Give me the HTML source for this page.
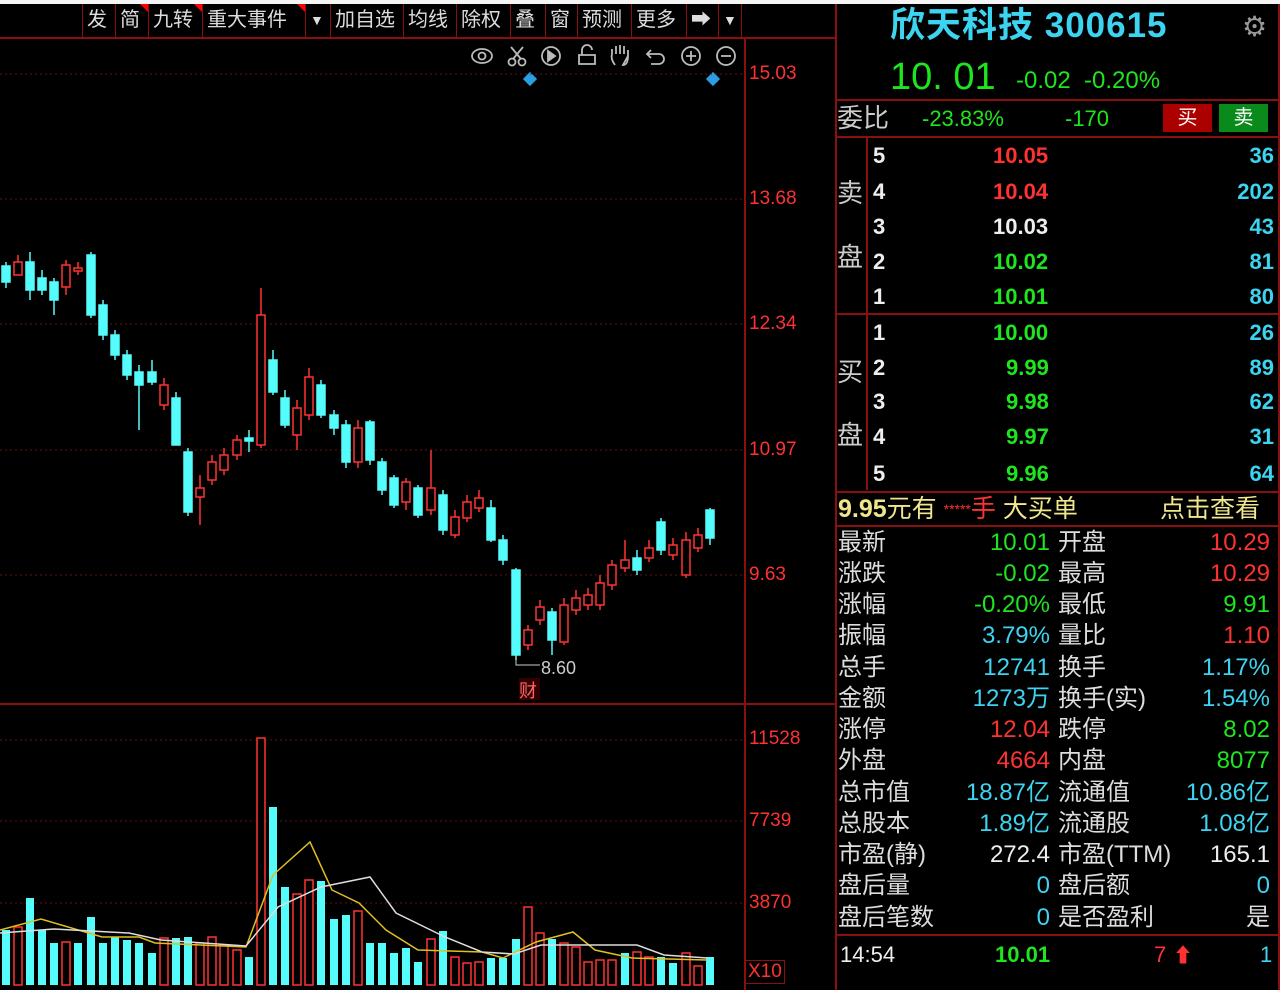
<!DOCTYPE html>
<html><head><meta charset="utf-8"><style>
*{margin:0;padding:0;box-sizing:border-box}
body{width:1280px;height:990px;background:#000;overflow:hidden;position:relative;font-family:"Liberation Sans","Noto Sans CJK SC",sans-serif;color:#ddd}
.a{position:absolute;white-space:nowrap}
.tb{position:absolute;top:4px;height:33px;border-left:1px solid #8a1010;color:#ddd;font-size:20px;line-height:33px;padding:0 4px}
.r{color:#ff3232}.g{color:#1ee61e}.c{color:#3cd4f0}.w{color:#eee}.y{color:#f0e68c}
.row{position:absolute;left:838px;width:436px;height:31px;font-size:24px;line-height:31px}
.row span{position:absolute}
.ob{position:absolute;left:868px;width:406px;height:35px;font-size:22px;line-height:35px;font-weight:bold}
.ob span{position:absolute}
</style></head><body>
<div class="a" style="left:0;top:0;width:1280px;height:4px;background:#f5f5f5"></div>
<div class="a" style="left:0;top:37px;width:836px;height:2px;background:#8a1010"></div>
<div class="tb" style="left:82px">发</div>
<div class="tb" style="left:115px">简</div>
<div class="tb" style="left:148px">九转</div>
<div class="tb" style="left:202px">重大事件</div>
<div class="tb" style="left:305px;font-size:14px">▼</div>
<div class="tb" style="left:330px">加自选</div>
<div class="tb" style="left:403px">均线</div>
<div class="tb" style="left:456px">除权</div>
<div class="tb" style="left:510px">叠</div>
<div class="tb" style="left:545px">窗</div>
<div class="tb" style="left:577px">预测</div>
<div class="tb" style="left:631px">更多</div>
<div class="tb" style="left:686px">➡</div>
<div class="tb" style="left:718px;font-size:14px;border-right:1px solid #8a1010">▼</div>
<div class="a" style="left:140px;top:4px;width:0;height:0;border-left:8px solid transparent;border-top:8px solid #f00"></div>
<div class="a" style="left:194px;top:4px;width:0;height:0;border-left:8px solid transparent;border-top:8px solid #f00"></div>
<div class="a" style="left:297px;top:4px;width:0;height:0;border-left:8px solid transparent;border-top:8px solid #f00"></div>
<svg class="a" style="left:465px;top:42px" width="280" height="30" fill="none" stroke="#bbb" stroke-width="1.8">
<ellipse cx="17" cy="14" rx="10" ry="7"/><circle cx="17" cy="14" r="3.5"/>
<circle cx="47" cy="20" r="3.5"/><circle cx="57" cy="20" r="3.5"/><path d="M48 17 L58 5 M56 17 L46 5"/>
<circle cx="86" cy="14" r="9"/><path d="M83 9 L90 14 L83 19 Z" fill="#bbb"/>
<path d="M114 22 V13 H130 V22 Z M117 13 V8 A5 5 0 0 1 127 8"/>
<path d="M150 23 C147 19 146 15 147 12 V7 M151 12 V4 M155 12 V3 M159 12 V4 M163 14 V8 M163 14 C163 20 161 23 158 23 Z"/>
<path d="M186 8 L182 12 L186 16 M182 12 H194 A5 5 0 0 1 194 22 H186"/>
<circle cx="226" cy="14" r="9"/><path d="M221 14 H231 M226 9 V19"/>
<circle cx="261" cy="14" r="9"/><path d="M256 14 H266"/>
</svg>
<div class="a" style="left:525px;top:74px;width:10px;height:10px;background:#2a9ee0;transform:rotate(45deg)"></div>
<div class="a" style="left:708px;top:74px;width:10px;height:10px;background:#2a9ee0;transform:rotate(45deg)"></div>
<div class="a" style="left:744px;top:37px;width:2px;height:953px;background:#8a1010"></div>
<div class="a" style="left:835px;top:4px;width:2px;height:986px;background:#8a1010"></div>
<div class="a" style="left:0;top:703px;width:836px;height:2px;background:#8a1010"></div>
<div class="a r" style="left:749px;top:63px;font-size:19px">15.03</div>
<div class="a r" style="left:749px;top:188px;font-size:19px">13.68</div>
<div class="a r" style="left:749px;top:313px;font-size:19px">12.34</div>
<div class="a r" style="left:749px;top:439px;font-size:19px">10.97</div>
<div class="a r" style="left:749px;top:564px;font-size:19px">9.63</div>
<div class="a r" style="left:749px;top:728px;font-size:19px">11528</div>
<div class="a r" style="left:749px;top:810px;font-size:19px">7739</div>
<div class="a r" style="left:749px;top:892px;font-size:19px">3870</div>
<div class="a r" style="left:745px;top:960px;font-size:19px;border:1px solid #8a1010;padding:0 2px">X10</div>
<svg class="a" style="left:0;top:0" width="745" height="990">
<g stroke="#6a1010" stroke-dasharray="2,3" stroke-width="1">
<line x1="0" y1="74" x2="744" y2="74"/><line x1="0" y1="199" x2="744" y2="199"/><line x1="0" y1="324" x2="744" y2="324"/><line x1="0" y1="450" x2="744" y2="450"/><line x1="0" y1="575" x2="744" y2="575"/>
<line x1="0" y1="740" x2="744" y2="740"/><line x1="0" y1="821" x2="744" y2="821"/><line x1="0" y1="903" x2="744" y2="903"/></g>
<g stroke-width="1.5">
<g stroke="#54fcfc" fill="#54fcfc">
<line x1="6" y1="262" x2="6" y2="288"/><rect x="2" y="266" width="8" height="16"/>
<line x1="30" y1="252" x2="30" y2="300"/><rect x="26" y="262" width="8" height="28"/>
<line x1="42" y1="270" x2="42" y2="295"/><rect x="38" y="278" width="8" height="12"/>
<line x1="54" y1="278" x2="54" y2="315"/><rect x="50" y="282" width="8" height="18"/>
<line x1="91" y1="252" x2="91" y2="318"/><rect x="87" y="255" width="8" height="60"/>
<line x1="103" y1="300" x2="103" y2="340"/><rect x="99" y="305" width="8" height="30"/>
<line x1="115" y1="330" x2="115" y2="360"/><rect x="111" y="335" width="8" height="20"/>
<line x1="127" y1="350" x2="127" y2="380"/><rect x="123" y="355" width="8" height="20"/>
<line x1="139" y1="365" x2="139" y2="430"/><rect x="135" y="372" width="8" height="13"/>
<line x1="152" y1="360" x2="152" y2="385"/><rect x="148" y="372" width="8" height="10"/>
<line x1="176" y1="392" x2="176" y2="445"/><rect x="172" y="398" width="8" height="47"/>
<line x1="188" y1="448" x2="188" y2="516"/><rect x="184" y="452" width="8" height="60"/>
<line x1="249" y1="430" x2="249" y2="452"/><rect x="245" y="438" width="8" height="3"/>
<line x1="273" y1="350" x2="273" y2="395"/><rect x="269" y="360" width="8" height="32"/>
<line x1="285" y1="390" x2="285" y2="428"/><rect x="281" y="398" width="8" height="27"/>
<line x1="321" y1="380" x2="321" y2="418"/><rect x="317" y="385" width="8" height="30"/>
<line x1="334" y1="410" x2="334" y2="435"/><rect x="330" y="415" width="8" height="13"/>
<line x1="346" y1="420" x2="346" y2="468"/><rect x="342" y="425" width="8" height="37"/>
<line x1="370" y1="420" x2="370" y2="465"/><rect x="366" y="422" width="8" height="38"/>
<line x1="382" y1="458" x2="382" y2="495"/><rect x="378" y="462" width="8" height="28"/>
<line x1="394" y1="475" x2="394" y2="508"/><rect x="390" y="478" width="8" height="27"/>
<line x1="418" y1="485" x2="418" y2="518"/><rect x="414" y="488" width="8" height="27"/>
<line x1="443" y1="490" x2="443" y2="535"/><rect x="439" y="495" width="8" height="35"/>
<line x1="491" y1="500" x2="491" y2="542"/><rect x="487" y="508" width="8" height="32"/>
<line x1="503" y1="535" x2="503" y2="565"/><rect x="499" y="540" width="8" height="20"/>
<line x1="516" y1="568" x2="516" y2="660"/><rect x="512" y="570" width="8" height="85"/>
<line x1="552" y1="608" x2="552" y2="655"/><rect x="548" y="612" width="8" height="28"/>
<line x1="637" y1="550" x2="637" y2="575"/><rect x="633" y="558" width="8" height="12"/>
<line x1="661" y1="518" x2="661" y2="555"/><rect x="657" y="522" width="8" height="28"/>
<line x1="710" y1="508" x2="710" y2="545"/><rect x="706" y="510" width="8" height="28"/>
</g>
<g stroke="#ff3232" fill="#000">
<line x1="18" y1="255" x2="18" y2="262"/><rect x="14" y="262" width="8" height="13"/>
<line x1="66" y1="260" x2="66" y2="295"/><rect x="62" y="265" width="8" height="22"/>
<line x1="78" y1="262" x2="78" y2="275"/><rect x="74" y="268" width="8" height="3"/>
<line x1="164" y1="378" x2="164" y2="410"/><rect x="160" y="385" width="8" height="20"/>
<line x1="200" y1="475" x2="200" y2="525"/><rect x="196" y="488" width="8" height="9"/>
<line x1="212" y1="455" x2="212" y2="485"/><rect x="208" y="462" width="8" height="18"/>
<line x1="224" y1="448" x2="224" y2="475"/><rect x="220" y="455" width="8" height="15"/>
<line x1="237" y1="435" x2="237" y2="460"/><rect x="233" y="440" width="8" height="15"/>
<line x1="261" y1="288" x2="261" y2="448"/><rect x="257" y="315" width="8" height="130"/>
<line x1="297" y1="400" x2="297" y2="450"/><rect x="293" y="408" width="8" height="27"/>
<line x1="309" y1="368" x2="309" y2="420"/><rect x="305" y="377" width="8" height="38"/>
<line x1="358" y1="420" x2="358" y2="468"/><rect x="354" y="428" width="8" height="34"/>
<line x1="406" y1="478" x2="406" y2="510"/><rect x="402" y="482" width="8" height="20"/>
<line x1="431" y1="450" x2="431" y2="515"/><rect x="427" y="488" width="8" height="22"/>
<line x1="455" y1="510" x2="455" y2="538"/><rect x="451" y="517" width="8" height="18"/>
<line x1="467" y1="495" x2="467" y2="522"/><rect x="463" y="502" width="8" height="16"/>
<line x1="479" y1="490" x2="479" y2="512"/><rect x="475" y="498" width="8" height="10"/>
<line x1="528" y1="625" x2="528" y2="650"/><rect x="524" y="630" width="8" height="15"/>
<line x1="540" y1="600" x2="540" y2="625"/><rect x="536" y="607" width="8" height="13"/>
<line x1="564" y1="598" x2="564" y2="645"/><rect x="560" y="605" width="8" height="37"/>
<line x1="576" y1="590" x2="576" y2="615"/><rect x="572" y="598" width="8" height="12"/>
<line x1="588" y1="588" x2="588" y2="610"/><rect x="584" y="595" width="8" height="10"/>
<line x1="600" y1="575" x2="600" y2="610"/><rect x="596" y="583" width="8" height="22"/>
<line x1="612" y1="560" x2="612" y2="590"/><rect x="608" y="565" width="8" height="20"/>
<line x1="625" y1="540" x2="625" y2="572"/><rect x="621" y="560" width="8" height="8"/>
<line x1="649" y1="540" x2="649" y2="562"/><rect x="645" y="548" width="8" height="10"/>
<line x1="673" y1="538" x2="673" y2="560"/><rect x="669" y="545" width="8" height="10"/>
<line x1="686" y1="532" x2="686" y2="578"/><rect x="682" y="540" width="8" height="35"/>
<line x1="698" y1="528" x2="698" y2="552"/><rect x="694" y="535" width="8" height="13"/>
</g></g>
<path d="M516 655 V665 H540" stroke="#ccc" fill="none"/>
<text x="541" y="674" fill="#ccc" font-size="18" font-family="Liberation Sans">8.60</text>
<rect x="519" y="678" width="21" height="22" fill="#300"/>
<text x="519" y="697" fill="#ff6666" font-size="18" font-family="Noto Sans CJK SC">财</text>
<g fill="#54fcfc">
<rect x="2" y="930" width="8" height="55"/><rect x="26" y="898" width="8" height="87"/><rect x="38" y="930" width="8" height="55"/><rect x="50" y="943" width="8" height="42"/><rect x="74" y="943" width="8" height="42"/><rect x="87" y="917" width="8" height="68"/><rect x="99" y="943" width="8" height="42"/><rect x="111" y="937" width="8" height="48"/><rect x="123" y="940" width="8" height="45"/><rect x="135" y="943" width="8" height="42"/><rect x="148" y="953" width="8" height="32"/><rect x="172" y="938" width="8" height="47"/><rect x="184" y="937" width="8" height="48"/><rect x="245" y="957" width="8" height="28"/><rect x="269" y="807" width="8" height="178"/><rect x="281" y="887" width="8" height="98"/><rect x="317" y="881" width="8" height="104"/><rect x="330" y="919" width="8" height="66"/><rect x="342" y="915" width="8" height="70"/><rect x="366" y="943" width="8" height="42"/><rect x="378" y="943" width="8" height="42"/><rect x="390" y="953" width="8" height="32"/><rect x="402" y="948" width="8" height="37"/><rect x="414" y="962" width="8" height="23"/><rect x="439" y="931" width="8" height="54"/><rect x="487" y="958" width="8" height="27"/><rect x="499" y="958" width="8" height="27"/><rect x="512" y="939" width="8" height="46"/><rect x="548" y="939" width="8" height="46"/><rect x="621" y="953" width="8" height="32"/><rect x="657" y="957" width="8" height="28"/><rect x="669" y="963" width="8" height="22"/><rect x="706" y="957" width="8" height="28"/>
</g>
<g stroke="#ff3232" fill="#000" stroke-width="1.5">
<rect x="14" y="927" width="8" height="58"/><rect x="62" y="942" width="8" height="43"/><rect x="160" y="938" width="8" height="47"/><rect x="196" y="943" width="8" height="42"/><rect x="208" y="937" width="8" height="48"/><rect x="220" y="945" width="8" height="40"/><rect x="233" y="950" width="8" height="35"/><rect x="257" y="738" width="8" height="247"/><rect x="293" y="894" width="8" height="91"/><rect x="305" y="880" width="8" height="105"/><rect x="354" y="911" width="8" height="74"/><rect x="427" y="939" width="8" height="46"/><rect x="451" y="957" width="8" height="28"/><rect x="463" y="963" width="8" height="22"/><rect x="475" y="962" width="8" height="23"/><rect x="524" y="907" width="8" height="78"/><rect x="536" y="933" width="8" height="52"/><rect x="560" y="943" width="8" height="42"/><rect x="572" y="947" width="8" height="38"/><rect x="584" y="962" width="8" height="23"/><rect x="596" y="960" width="8" height="25"/><rect x="608" y="960" width="8" height="25"/><rect x="633" y="952" width="8" height="33"/><rect x="645" y="957" width="8" height="28"/><rect x="682" y="953" width="8" height="32"/><rect x="694" y="966" width="8" height="19"/>
</g>
<polyline fill="none" stroke="#e0c020" stroke-width="1.5" points="0,930 41,919 102,937 139,937 155,943 246,947 273,875 310,842 332,890 359,903 386,930 418,950 482,952 503,958 536,942 573,932 595,950 632,958 707,960"/>
<polyline fill="none" stroke="#ddd" stroke-width="1.5" points="0,933 54,929 129,933 161,940 246,946 278,907 321,887 370,877 396,913 445,937 482,952 514,954 541,945 637,945 664,955 707,958"/>
</svg>
<div class="a" style="left:1278px;top:4px;width:2px;height:986px;background:#8a1010"></div>
<div class="a c" style="left:890px;top:4px;font-size:35px;font-weight:bold;line-height:44px;letter-spacing:1px">欣天科技 300615</div>
<div class="a" style="left:1242px;top:10px;font-size:28px;color:#999">⚙</div>
<div class="a g" style="left:890px;top:55px;font-size:38px;line-height:44px">10. 01</div>
<div class="a g" style="left:1016px;top:66px;font-size:24px;line-height:30px">-0.02&nbsp;&nbsp;-0.20%</div>
<div class="a" style="left:836px;top:99px;width:444px;height:2px;background:#8a1010"></div>
<div class="a" style="left:837px;top:101px;font-size:26px;line-height:34px;color:#ccc">委比</div>
<div class="a g" style="left:922px;top:104px;font-size:22px;line-height:30px">-23.83%</div>
<div class="a g" style="left:1065px;top:104px;font-size:22px;line-height:30px">-170</div>
<div class="a" style="left:1163px;top:104px;width:49px;height:28px;background:#a00;color:#fff;font-size:20px;text-align:center;line-height:28px">买</div>
<div class="a" style="left:1219px;top:104px;width:49px;height:28px;background:#0a8a1a;color:#fff;font-size:20px;text-align:center;line-height:28px">卖</div>
<div class="a" style="left:836px;top:136px;width:444px;height:2px;background:#8a1010"></div>
<div class="a" style="left:866px;top:138px;width:2px;height:352px;background:#8a1010"></div>
<div class="a" style="left:837px;top:176px;font-size:26px;color:#ccc;line-height:34px">卖</div>
<div class="a" style="left:837px;top:240px;font-size:26px;color:#ccc;line-height:34px">盘</div>
<div class="a" style="left:837px;top:355px;font-size:26px;color:#ccc;line-height:34px">买</div>
<div class="a" style="left:837px;top:418px;font-size:26px;color:#ccc;line-height:34px">盘</div>
<div class="ob" style="top:138px"><span class="w" style="left:5px">5</span><span class="r" style="left:125px">10.05</span><span class="c" style="right:0">36</span></div>
<div class="ob" style="top:174px"><span class="w" style="left:5px">4</span><span class="r" style="left:125px">10.04</span><span class="c" style="right:0">202</span></div>
<div class="ob" style="top:209px"><span class="w" style="left:5px">3</span><span class="w" style="left:125px">10.03</span><span class="c" style="right:0">43</span></div>
<div class="ob" style="top:244px"><span class="w" style="left:5px">2</span><span class="g" style="left:125px">10.02</span><span class="c" style="right:0">81</span></div>
<div class="ob" style="top:279px"><span class="w" style="left:5px">1</span><span class="g" style="left:125px">10.01</span><span class="c" style="right:0">80</span></div>
<div class="a" style="left:836px;top:313px;width:444px;height:2px;background:#8a1010"></div>
<div class="ob" style="top:315px"><span class="w" style="left:5px">1</span><span class="g" style="left:125px">10.00</span><span class="c" style="right:0">26</span></div>
<div class="ob" style="top:350px"><span class="w" style="left:5px">2</span><span class="g" style="left:138px">9.99</span><span class="c" style="right:0">89</span></div>
<div class="ob" style="top:384px"><span class="w" style="left:5px">3</span><span class="g" style="left:138px">9.98</span><span class="c" style="right:0">62</span></div>
<div class="ob" style="top:419px"><span class="w" style="left:5px">4</span><span class="g" style="left:138px">9.97</span><span class="c" style="right:0">31</span></div>
<div class="ob" style="top:456px"><span class="w" style="left:5px">5</span><span class="g" style="left:138px">9.96</span><span class="c" style="right:0">64</span></div>
<div class="a" style="left:836px;top:491px;width:444px;height:2px;background:#8a1010"></div>
<div class="a y" style="left:838px;top:494px;font-size:25px;line-height:30px"><b>9.95</b>元有 <span class="r" style="font-size:14px;vertical-align:top">*****</span><span class="r">手</span> 大买单</div>
<div class="a y" style="left:1160px;top:494px;font-size:25px;line-height:30px">点击查看</div>
<div class="a" style="left:836px;top:525px;width:444px;height:2px;background:#8a1010"></div>
<div class="row" style="top:527px"><span style="left:0">最新</span><span class="g" style="right:224px">10.01</span><span style="left:220px">开盘</span><span class="r" style="right:4px">10.29</span></div>
<div class="row" style="top:558px"><span style="left:0">涨跌</span><span class="g" style="right:224px">-0.02</span><span style="left:220px">最高</span><span class="r" style="right:4px">10.29</span></div>
<div class="row" style="top:589px"><span style="left:0">涨幅</span><span class="g" style="right:224px">-0.20%</span><span style="left:220px">最低</span><span class="g" style="right:4px">9.91</span></div>
<div class="row" style="top:620px"><span style="left:0">振幅</span><span class="c" style="right:224px">3.79%</span><span style="left:220px">量比</span><span class="r" style="right:4px">1.10</span></div>
<div class="row" style="top:652px"><span style="left:0">总手</span><span class="c" style="right:224px">12741</span><span style="left:220px">换手</span><span class="c" style="right:4px">1.17%</span></div>
<div class="row" style="top:683px"><span style="left:0">金额</span><span class="c" style="right:224px">1273万</span><span style="left:220px">换手(实)</span><span class="c" style="right:4px">1.54%</span></div>
<div class="row" style="top:714px"><span style="left:0">涨停</span><span class="r" style="right:224px">12.04</span><span style="left:220px">跌停</span><span class="g" style="right:4px">8.02</span></div>
<div class="row" style="top:745px"><span style="left:0">外盘</span><span class="r" style="right:224px">4664</span><span style="left:220px">内盘</span><span class="g" style="right:4px">8077</span></div>
<div class="row" style="top:777px"><span style="left:0">总市值</span><span class="c" style="right:224px">18.87亿</span><span style="left:220px">流通值</span><span class="c" style="right:4px">10.86亿</span></div>
<div class="row" style="top:808px"><span style="left:0">总股本</span><span class="c" style="right:224px">1.89亿</span><span style="left:220px">流通股</span><span class="c" style="right:4px">1.08亿</span></div>
<div class="row" style="top:839px"><span style="left:0">市盈(静)</span><span class="w" style="right:224px">272.4</span><span style="left:220px">市盈(TTM)</span><span class="w" style="right:4px">165.1</span></div>
<div class="row" style="top:870px"><span style="left:0">盘后量</span><span class="c" style="right:224px">0</span><span style="left:220px">盘后额</span><span class="c" style="right:4px">0</span></div>
<div class="row" style="top:902px"><span style="left:0">盘后笔数</span><span class="c" style="right:224px">0</span><span style="left:220px">是否盈利</span><span style="right:4px">是</span></div>
<div class="a" style="left:836px;top:934px;width:444px;height:2px;background:#8a1010"></div>
<div class="a w" style="left:840px;top:940px;font-size:22px;line-height:30px">14:54</div>
<div class="a g" style="left:995px;top:940px;font-size:22px;line-height:30px;font-weight:bold">10.01</div>
<div class="a r" style="left:1154px;top:940px;font-size:22px;line-height:30px">7</div>
<div class="a r" style="left:1173px;top:943px;font-size:20px;line-height:26px">⬆</div>
<div class="a c" style="left:1260px;top:940px;font-size:22px;line-height:30px">1</div>
</body></html>
